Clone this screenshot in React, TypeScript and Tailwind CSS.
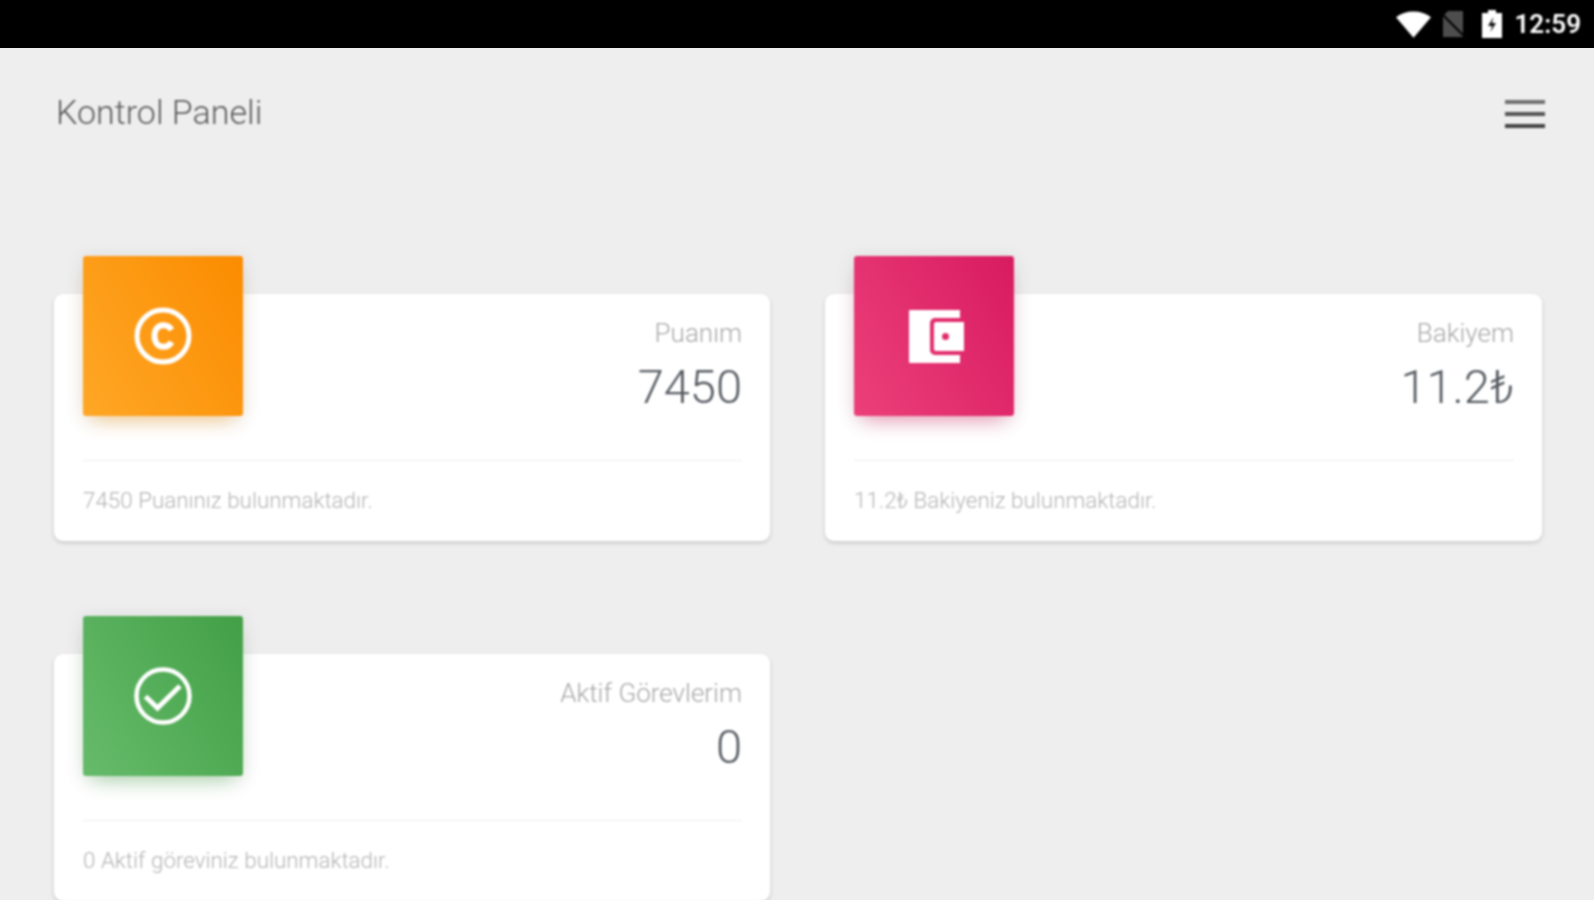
import React from "react";

interface StatCardProps {
  title: string;
  value: string;
  note: string;
  iconBox: string;
  icon: React.ReactNode;
}

const CopyrightIcon = () => (
  <svg width="58" height="58" viewBox="0 0 58 58" fill="none" stroke="white">
    <circle cx="29" cy="29" r="26" strokeWidth="5" />
    <path d="M37.500 23c-1.600-3-4.400-4.800-8-4.800-5.800 0-9 4.800-9 10.800s3.200 10.800 9 10.800c3.600 0 6.400-1.800 8-4.800" strokeWidth="6" />
  </svg>
);

const WalletIcon = () => (
  <svg width="55" height="53" viewBox="0 0 55 53" fill="white" className="ml-[5px]">
    <path d="M1 0H51V8H26a5 5 0 0 0-5 5V40a5 5 0 0 0 5 5H51V53H1a1 1 0 0 1-1-1V1a1 1 0 0 1 1-1z" />
    <path fillRule="evenodd" d="M27 12H55V41H27a2 2 0 0 1-2-2V14a2 2 0 0 1 2-2zM36.500 23a3.500 3.500 0 1 0 0 7 3.500 3.500 0 0 0 0-7z" />
  </svg>
);

const CheckIcon = () => (
  <svg width="58" height="58" viewBox="0 0 58 58" fill="none" stroke="white">
    <circle cx="29" cy="29" r="26.500" strokeWidth="4.500" />
    <path d="M11.500 29.500 23.500 41 46 19" strokeWidth="5" />
  </svg>
);

const StatCard = ({ title, value, note, iconBox, icon }: StatCardProps) => (
  <div className="relative h-[247px] rounded-[9px] bg-white pl-[29px] pr-[28px] pt-[23px] shadow-[0_2px_4px_rgba(0,0,0,0.16)]">
    <div
      className={`absolute left-[29px] top-[-38px] flex h-[160px] w-[160px] items-center justify-center rounded-[3px] ${iconBox}`}>
      {icon}
    </div>
    <div className="flex h-[144px] flex-col items-end border-b border-[#f0f0f0]">
      <p className="text-[26px] leading-[32px] font-light text-[#a8a8a8]">{title}</p>
      <p className="mt-[10px] text-[47px] leading-[56px] font-light text-[#555a60]">{value}</p>
    </div>
    <p className="mt-[25px] text-[22.400px] leading-[28px] font-light text-[#b4b4b4]">{note}</p>
  </div>
);

export default function App() {
  return (
    <div className="h-[900px] overflow-hidden bg-[#eeeeee] font-['Roboto',sans-serif]">
      <div className="h-[48px] bg-black">
        <div className="flex h-full items-center justify-end pr-[13px] blur-[0.9px]">
          <svg width="35" height="27" viewBox="0 0 36 27" fill="white" className="mr-[10px]">
            <path d="M18 27 0 6C5 2 11 0 18 0s13 2 18 6z" />
          </svg>
          <svg width="24" height="26" viewBox="0 0 24 26" className="mr-[17px]">
            <path d="M7 0h15v26H2V5z" fill="#4d4d4d" />
            <path d="M0 2 23 25" stroke="#000" strokeWidth="2" />
          </svg>
          <svg width="20" height="28" viewBox="0 0 20 28" className="mr-[13px]">
            <path d="M6 0h8v3h6v25H0V3h6z" fill="white" />
            <path d="M11.500 7 6 16h4l-1.500 6L14 13h-4z" fill="#111" />
          </svg>
          <span className="text-[26px] font-semibold text-white">12:59</span>
        </div>
      </div>

      <div className="pb-[40px] blur-[0.9px]">
        <div className="flex items-center justify-between pl-[56px] pr-[49px] pt-[44px]">
          <h1 className="text-[34px] leading-[40px] font-light text-[#5c5c5c]">Kontrol Paneli</h1>
          <div className="mt-[4px] flex w-[40px] flex-col gap-[8px]">
            <div className="h-[4px] bg-[#707070]" />
            <div className="h-[4px] bg-[#555555]" />
            <div className="h-[4px] bg-[#444444]" />
          </div>
        </div>

        <div className="mt-[162px] grid grid-cols-[716px_717px] gap-x-[55px] gap-y-[113px] pl-[54px]">
          <StatCard
            title="Puanım"
            value="7450"
            note="7450 Puanınız bulunmaktadır."
            iconBox="bg-[linear-gradient(60deg,#ffa726,#fb8c00)] shadow-[0_12px_20px_-10px_rgba(255,152,0,0.45),0_4px_20px_0_rgba(0,0,0,0.1)]"
            icon={<CopyrightIcon />}
          />
          <StatCard
            title="Bakiyem"
            value="11.2₺"
            note="11.2₺ Bakiyeniz bulunmaktadır."
            iconBox="bg-[linear-gradient(60deg,#ec407a,#d81b60)] shadow-[0_12px_20px_-10px_rgba(233,30,99,0.45),0_4px_20px_0_rgba(0,0,0,0.1)]"
            icon={<WalletIcon />}
          />
          <StatCard
            title="Aktif Görevlerim"
            value="0"
            note="0 Aktif göreviniz bulunmaktadır."
            iconBox="bg-[linear-gradient(60deg,#66bb6a,#43a047)] shadow-[0_12px_20px_-10px_rgba(76,175,80,0.45),0_4px_20px_0_rgba(0,0,0,0.1)]"
            icon={<CheckIcon />}
          />
        </div>
      </div>
    </div>
  );
}
